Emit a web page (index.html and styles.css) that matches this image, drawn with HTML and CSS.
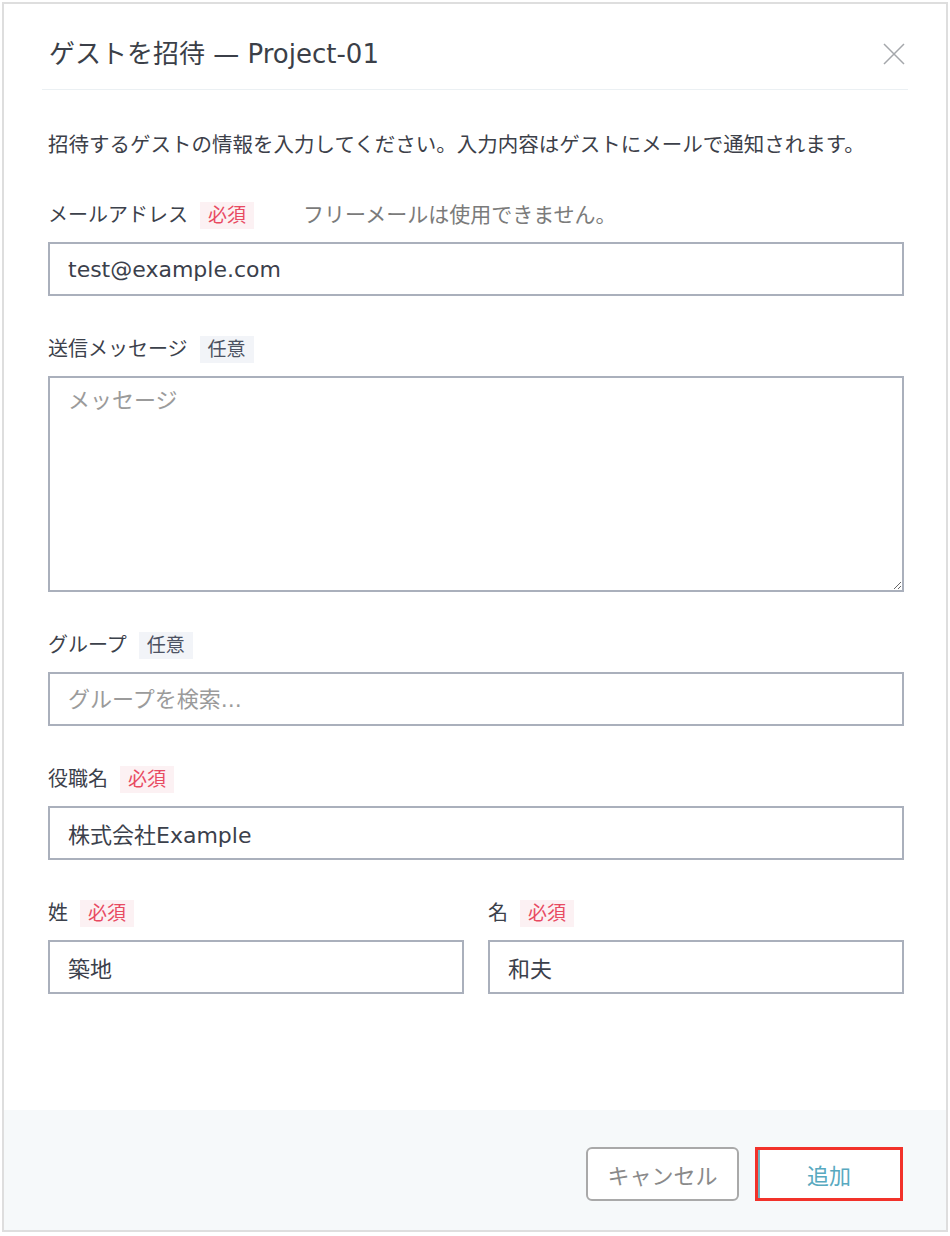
FILE: index.html
```html
<!DOCTYPE html>
<html lang="ja">
<head>
<meta charset="utf-8">
<title>ゲストを招待</title>
<link rel="stylesheet" href="styles.css">
</head>
<body>
<div class="dialog">
  <header class="dialog-header">
    <h1 class="dialog-title">ゲストを招待 — Project-01</h1>
    <button class="close-btn" type="button" aria-label="閉じる">
      <svg width="22" height="22" viewBox="0 0 22 22"><path d="M1 1 L21 21 M21 1 L1 21" stroke="#a4a7ab" stroke-width="1.5" fill="none"/></svg>
    </button>
  </header>
  <main class="dialog-body">
    <p class="intro">招待するゲストの情報を入力してください。入力内容はゲストにメールで通知されます。</p>

    <div class="field">
      <div class="label-row">
        <span class="label">メールアドレス</span>
        <span class="badge badge-required">必須</span>
        <span class="hint">フリーメールは使用できません。</span>
      </div>
      <input class="input" type="text" value="test@example.com">
    </div>

    <div class="field">
      <div class="label-row">
        <span class="label">送信メッセージ</span>
        <span class="badge badge-optional">任意</span>
      </div>
      <textarea class="input textarea" placeholder="メッセージ"></textarea>
    </div>

    <div class="field">
      <div class="label-row">
        <span class="label">グループ</span>
        <span class="badge badge-optional">任意</span>
      </div>
      <input class="input" type="text" placeholder="グループを検索...">
    </div>

    <div class="field">
      <div class="label-row">
        <span class="label">役職名</span>
        <span class="badge badge-required">必須</span>
      </div>
      <input class="input" type="text" value="株式会社Example">
    </div>

    <div class="name-row">
      <div class="field">
        <div class="label-row">
          <span class="label">姓</span>
          <span class="badge badge-required">必須</span>
        </div>
        <input class="input" type="text" value="築地">
      </div>
      <div class="field">
        <div class="label-row">
          <span class="label">名</span>
          <span class="badge badge-required">必須</span>
        </div>
        <input class="input" type="text" value="和夫">
      </div>
    </div>
  </main>
  <footer class="dialog-footer">
    <button class="btn btn-cancel" type="button">キャンセル</button>
    <button class="btn btn-primary" type="button">追加</button>
  </footer>
</div>
</body>
</html>
```

FILE: styles.css
```css
* { box-sizing: border-box; }

html, body {
  margin: 0;
  padding: 0;
  background: #ffffff;
}

body {
  font-family: "DejaVu Sans", "Noto Sans CJK JP", sans-serif;
  color: #3b3f48;
}

.dialog {
  margin: 2px;
  width: 946px;
  height: 1230px;
  border: 2px solid #dedede;
  background: #ffffff;
  display: flex;
  flex-direction: column;
}

.dialog-header {
  margin: 0 38px;
  padding: 32px 3px 17px 7px;
  border-bottom: 1px solid #ebf0f3;
  display: flex;
  align-items: center;
  justify-content: space-between;
}

.dialog-title {
  margin: 0;
  font-size: 26px;
  font-weight: normal;
  line-height: 36px;
  color: #3b3f48;
}

.close-btn {
  width: 22px;
  height: 22px;
  padding: 0;
  border: none;
  background: none;
  display: flex;
}

.dialog-body {
  flex: 1;
  padding: 40px 42px 0 44px;
}

.intro {
  margin: 0 0 42px;
  font-size: 20.5px;
  line-height: 30px;
  color: #3c4049;
  white-space: nowrap;
}

.field {
  display: flex;
  flex-direction: column;
  gap: 13px;
  margin-bottom: 40px;
}

.label-row {
  display: flex;
  align-items: center;
  gap: 12px;
  height: 27px;
}

.label {
  font-size: 20px;
  line-height: 27px;
  color: #3c414b;
}

.badge {
  font-size: 19px;
  line-height: 27px;
  padding: 0 8px;
}

.badge-required {
  background: #fcf1f3;
  color: #e84a62;
}

.badge-optional {
  background: #f2f4f8;
  color: #4c5262;
}

.hint {
  margin-left: 37px;
  font-size: 21px;
  line-height: 27px;
  color: #7b7b7b;
}

.input {
  display: block;
  width: 100%;
  height: 54px;
  border: 2px solid #aab0bc;
  border-radius: 0;
  padding: 0 18px;
  font-family: "DejaVu Sans", "Noto Sans CJK JP", sans-serif;
  font-size: 22px;
  color: #3b404b;
  background: #ffffff;
  outline: none;
}

.input::placeholder {
  color: #9b9b9b;
}

.textarea {
  height: 216px;
  padding: 8px 18px;
  line-height: 30px;
  resize: vertical;
}

.name-row {
  display: grid;
  grid-template-columns: 1fr 1fr;
  column-gap: 24px;
}

.dialog-footer {
  background: #f6f9fa;
  padding: 37px 43px 29px;
  display: flex;
  justify-content: flex-end;
  gap: 16px;
}

.btn {
  height: 54px;
  font-family: "DejaVu Sans", "Noto Sans CJK JP", sans-serif;
  font-size: 22px;
  background: #ffffff;
  cursor: pointer;
}

.btn-cancel {
  width: 153px;
  border: 2px solid #a9a9a9;
  border-radius: 6px;
  color: #8a8a8a;
}

.btn-primary {
  width: 148px;
  border: 3px solid #f2322a;
  border-radius: 0;
  box-shadow: inset 2px 0 0 #6fb3c2;
  color: #58a9bf;
}
```
